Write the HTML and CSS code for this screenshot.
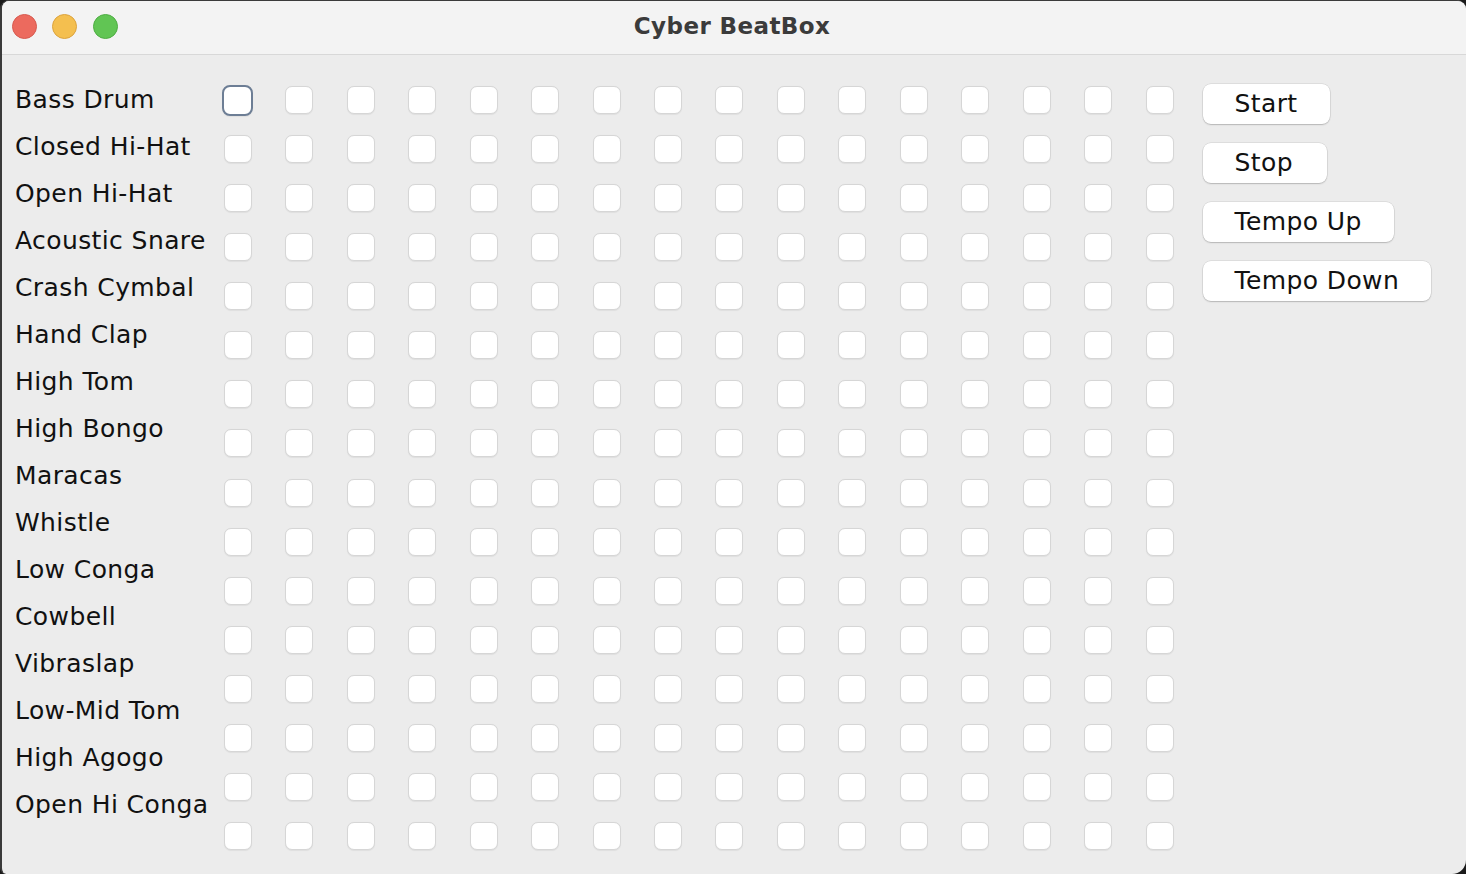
FILE: index.html
```html
<!DOCTYPE html>
<html>
<head>
<meta charset="utf-8">
<title>Cyber BeatBox</title>
<link rel="stylesheet" href="styles.css">
</head>
<body>
<div class="window">
  <div class="titlebar">
    <div class="lights">
      <span class="light red"></span>
      <span class="light yellow"></span>
      <span class="light green"></span>
    </div>
    <div class="title">Cyber BeatBox</div>
  </div>
  <div class="content">
    <div class="labels">
      <div class="label">Bass Drum</div>
      <div class="label">Closed Hi-Hat</div>
      <div class="label">Open Hi-Hat</div>
      <div class="label">Acoustic Snare</div>
      <div class="label">Crash Cymbal</div>
      <div class="label">Hand Clap</div>
      <div class="label">High Tom</div>
      <div class="label">High Bongo</div>
      <div class="label">Maracas</div>
      <div class="label">Whistle</div>
      <div class="label">Low Conga</div>
      <div class="label">Cowbell</div>
      <div class="label">Vibraslap</div>
      <div class="label">Low-Mid Tom</div>
      <div class="label">High Agogo</div>
      <div class="label">Open Hi Conga</div>
    </div>
    <div class="grid">
      <i class="cb focus"></i><i class="cb"></i><i class="cb"></i><i class="cb"></i><i class="cb"></i><i class="cb"></i><i class="cb"></i><i class="cb"></i><i class="cb"></i><i class="cb"></i><i class="cb"></i><i class="cb"></i><i class="cb"></i><i class="cb"></i><i class="cb"></i><i class="cb"></i>
      <i class="cb"></i><i class="cb"></i><i class="cb"></i><i class="cb"></i><i class="cb"></i><i class="cb"></i><i class="cb"></i><i class="cb"></i><i class="cb"></i><i class="cb"></i><i class="cb"></i><i class="cb"></i><i class="cb"></i><i class="cb"></i><i class="cb"></i><i class="cb"></i>
      <i class="cb"></i><i class="cb"></i><i class="cb"></i><i class="cb"></i><i class="cb"></i><i class="cb"></i><i class="cb"></i><i class="cb"></i><i class="cb"></i><i class="cb"></i><i class="cb"></i><i class="cb"></i><i class="cb"></i><i class="cb"></i><i class="cb"></i><i class="cb"></i>
      <i class="cb"></i><i class="cb"></i><i class="cb"></i><i class="cb"></i><i class="cb"></i><i class="cb"></i><i class="cb"></i><i class="cb"></i><i class="cb"></i><i class="cb"></i><i class="cb"></i><i class="cb"></i><i class="cb"></i><i class="cb"></i><i class="cb"></i><i class="cb"></i>
      <i class="cb"></i><i class="cb"></i><i class="cb"></i><i class="cb"></i><i class="cb"></i><i class="cb"></i><i class="cb"></i><i class="cb"></i><i class="cb"></i><i class="cb"></i><i class="cb"></i><i class="cb"></i><i class="cb"></i><i class="cb"></i><i class="cb"></i><i class="cb"></i>
      <i class="cb"></i><i class="cb"></i><i class="cb"></i><i class="cb"></i><i class="cb"></i><i class="cb"></i><i class="cb"></i><i class="cb"></i><i class="cb"></i><i class="cb"></i><i class="cb"></i><i class="cb"></i><i class="cb"></i><i class="cb"></i><i class="cb"></i><i class="cb"></i>
      <i class="cb"></i><i class="cb"></i><i class="cb"></i><i class="cb"></i><i class="cb"></i><i class="cb"></i><i class="cb"></i><i class="cb"></i><i class="cb"></i><i class="cb"></i><i class="cb"></i><i class="cb"></i><i class="cb"></i><i class="cb"></i><i class="cb"></i><i class="cb"></i>
      <i class="cb"></i><i class="cb"></i><i class="cb"></i><i class="cb"></i><i class="cb"></i><i class="cb"></i><i class="cb"></i><i class="cb"></i><i class="cb"></i><i class="cb"></i><i class="cb"></i><i class="cb"></i><i class="cb"></i><i class="cb"></i><i class="cb"></i><i class="cb"></i>
      <i class="cb"></i><i class="cb"></i><i class="cb"></i><i class="cb"></i><i class="cb"></i><i class="cb"></i><i class="cb"></i><i class="cb"></i><i class="cb"></i><i class="cb"></i><i class="cb"></i><i class="cb"></i><i class="cb"></i><i class="cb"></i><i class="cb"></i><i class="cb"></i>
      <i class="cb"></i><i class="cb"></i><i class="cb"></i><i class="cb"></i><i class="cb"></i><i class="cb"></i><i class="cb"></i><i class="cb"></i><i class="cb"></i><i class="cb"></i><i class="cb"></i><i class="cb"></i><i class="cb"></i><i class="cb"></i><i class="cb"></i><i class="cb"></i>
      <i class="cb"></i><i class="cb"></i><i class="cb"></i><i class="cb"></i><i class="cb"></i><i class="cb"></i><i class="cb"></i><i class="cb"></i><i class="cb"></i><i class="cb"></i><i class="cb"></i><i class="cb"></i><i class="cb"></i><i class="cb"></i><i class="cb"></i><i class="cb"></i>
      <i class="cb"></i><i class="cb"></i><i class="cb"></i><i class="cb"></i><i class="cb"></i><i class="cb"></i><i class="cb"></i><i class="cb"></i><i class="cb"></i><i class="cb"></i><i class="cb"></i><i class="cb"></i><i class="cb"></i><i class="cb"></i><i class="cb"></i><i class="cb"></i>
      <i class="cb"></i><i class="cb"></i><i class="cb"></i><i class="cb"></i><i class="cb"></i><i class="cb"></i><i class="cb"></i><i class="cb"></i><i class="cb"></i><i class="cb"></i><i class="cb"></i><i class="cb"></i><i class="cb"></i><i class="cb"></i><i class="cb"></i><i class="cb"></i>
      <i class="cb"></i><i class="cb"></i><i class="cb"></i><i class="cb"></i><i class="cb"></i><i class="cb"></i><i class="cb"></i><i class="cb"></i><i class="cb"></i><i class="cb"></i><i class="cb"></i><i class="cb"></i><i class="cb"></i><i class="cb"></i><i class="cb"></i><i class="cb"></i>
      <i class="cb"></i><i class="cb"></i><i class="cb"></i><i class="cb"></i><i class="cb"></i><i class="cb"></i><i class="cb"></i><i class="cb"></i><i class="cb"></i><i class="cb"></i><i class="cb"></i><i class="cb"></i><i class="cb"></i><i class="cb"></i><i class="cb"></i><i class="cb"></i>
      <i class="cb"></i><i class="cb"></i><i class="cb"></i><i class="cb"></i><i class="cb"></i><i class="cb"></i><i class="cb"></i><i class="cb"></i><i class="cb"></i><i class="cb"></i><i class="cb"></i><i class="cb"></i><i class="cb"></i><i class="cb"></i><i class="cb"></i><i class="cb"></i>
    </div>
    <div class="buttons">
      <button class="btn">Start</button>
      <button class="btn">Stop</button>
      <button class="btn">Tempo Up</button>
      <button class="btn">Tempo Down</button>
    </div>
  </div>
</div>
</body>
</html>
```
FILE: styles.css
```css
html, body {
  margin: 0;
  padding: 0;
  background: #1a1a1a;
}
body {
  width: 1466px;
  height: 874px;
  overflow: hidden;
  font-family: "DejaVu Sans", "Liberation Sans", sans-serif;
}
.window {
  box-sizing: border-box;
  width: 1466px;
  height: 874px;
  background: #ececec;
  border-top: 1px solid #3a3a3a;
  border-left: 2px solid #3a3a3a;
  border-radius: 9px 9px 14px 6px;
  overflow: hidden;
  display: flex;
  flex-direction: column;
}
.titlebar {
  box-sizing: border-box;
  height: 54px;
  flex: 0 0 54px;
  background: #f3f3f3;
  border-bottom: 1px solid #d8d8d8;
  display: flex;
  align-items: center;
  position: relative;
}
.lights {
  display: flex;
  gap: 15.5px;
  padding-left: 9.5px;
  margin-top: -2px;
}
.light {
  width: 25px;
  height: 25px;
  border-radius: 50%;
  box-sizing: border-box;
}
.red { background: #ec6a5e; border: 1px solid #d75a4f; }
.yellow { background: #f4bf4f; border: 1px solid #dca33d; }
.green { background: #61c554; border: 1px solid #4ead43; }
.title {
  position: absolute;
  left: 0;
  right: 0;
  top: 0;
  bottom: 0;
  display: flex;
  align-items: center;
  justify-content: center;
  padding-right: 4px;
  padding-bottom: 4px;
  font-weight: bold;
  font-size: 23px;
  letter-spacing: 0.4px;
  color: #3b3b3b;
  pointer-events: none;
}
.content {
  display: flex;
  align-items: flex-start;
  flex: 1;
}
.labels {
  width: 192px;
  padding-left: 13px;
  padding-top: 21px;
  flex: 0 0 auto;
  box-sizing: content-box;
}
.label {
  height: 47px;
  line-height: 47px;
  font-size: 25px;
  letter-spacing: 0.4px;
  color: #111;
  white-space: nowrap;
  width: 192px;
}
.grid {
  display: grid;
  grid-template-columns: repeat(16, 61.47px);
  grid-auto-rows: 49.07px;
  place-items: center;
  padding-top: 20.5px;
  flex: 0 0 auto;
}
.cb {
  display: block;
  box-sizing: border-box;
  width: 28px;
  height: 28px;
  border-radius: 7px;
  background: #fff;
  border: 1px solid #d6d6d6;
  box-shadow: 0 0.5px 1px rgba(0,0,0,0.06);
}
.cb.focus {
  width: 31px;
  height: 31px;
  border: 2px solid #6d7e95;
  border-radius: 8px;
}
.buttons {
  display: flex;
  flex-direction: column;
  align-items: flex-start;
  gap: 19px;
  padding-top: 29px;
  margin-left: 12px;
}
.btn {
  height: 40px;
  padding: 0 32px 2px 32px;
  min-width: 124px;
  text-align: left;
  font-family: "DejaVu Sans", "Liberation Sans", sans-serif;
  font-size: 25px;
  letter-spacing: 0.4px;
  color: #111;
  background: #fff;
  border: none;
  border-radius: 8px;
  box-shadow: 0 0 0 0.5px rgba(0,0,0,0.12), 0 1px 1.5px rgba(0,0,0,0.18);
}
```
